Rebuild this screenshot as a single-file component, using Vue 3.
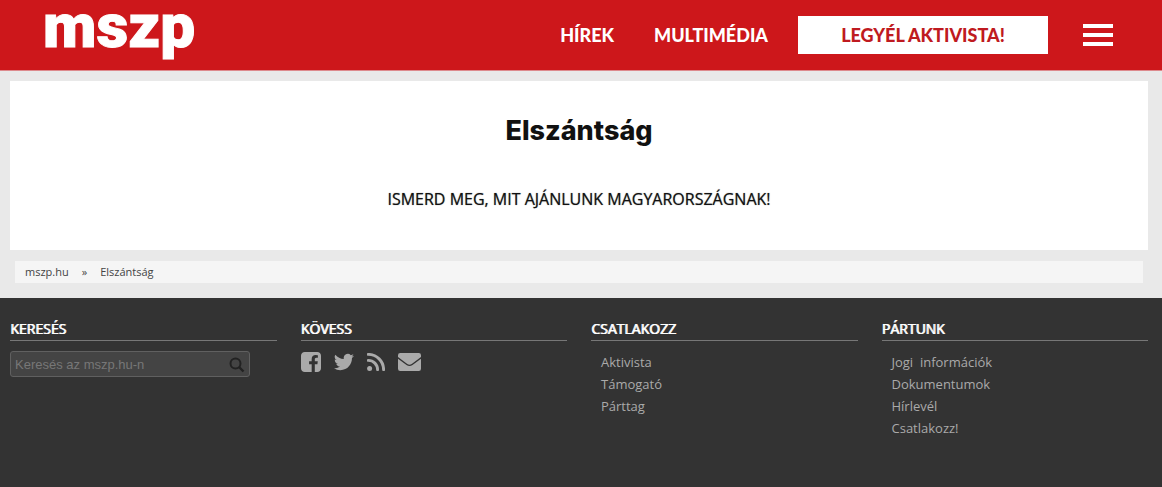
<script setup>
const joinLinks = ['Aktivista', 'Támogató', 'Párttag']
const partyLinks = ['Jogi \u00a0információk', 'Dokumentumok', 'Hírlevél', 'Csatlakozz!']
</script>

<template>
  <div class="page">
    <header class="header">
      <a href="#" class="logo">mszp</a>
      <nav class="nav">
        <a href="#" class="nav-link">HÍREK</a>
        <a href="#" class="nav-link">MULTIMÉDIA</a>
        <a href="#" class="cta">LEGYÉL AKTIVISTA!</a>
        <button type="button" class="menu" aria-label="Menü">
          <span></span><span></span><span></span>
        </button>
      </nav>
    </header>

    <main class="main">
      <article class="card">
        <h1>Elszántság</h1>
        <p>ISMERD MEG, MIT AJÁNLUNK MAGYARORSZÁGNAK!</p>
      </article>
      <nav class="crumbs">
        <a href="#">mszp.hu</a>
        <span>»</span>
        <a href="#">Elszántság</a>
      </nav>
    </main>

    <footer class="footer">
      <section>
        <h2>KERESÉS</h2>
        <form class="search" @submit.prevent>
          <input type="text" aria-label="Keresés" placeholder="Keresés az mszp.hu-n" />
          <button type="submit" aria-label="Keresés indítása">
            <svg width="16" height="16" viewBox="0 0 16 16" fill="none" stroke="#222" stroke-width="2">
              <circle cx="6.5" cy="6.5" r="5" />
              <path d="M10 10l4.5 4.5" stroke-width="2.4" />
            </svg>
          </button>
        </form>
      </section>
      <section>
        <h2>KÖVESS</h2>
        <div class="social">
          <a href="#" aria-label="Facebook">
            <svg width="20" height="20" viewBox="0 0 1536 1536"><path d="M1248 0q119 0 203.500 84.500t84.500 203.500v960q0 119-84.500 203.500t-203.500 84.500h-188v-595h199l30-232h-229v-148q0-56 23.500-84t91.500-28l122-1v-207q-63-9-178-9-136 0-217.500 80t-81.500 226v171h-200v232h200v595h-532q-119 0-203.500-84.500t-84.500-203.500v-960q0-119 84.500-203.500t203.500-84.500z" /></svg>
          </a>
          <a href="#" aria-label="Twitter">
            <svg width="20" height="18" viewBox="0 2 24 20"><path d="M23.950 4.570a10 10 0 0 1-2.820.77 4.960 4.960 0 0 0 2.160-2.720 9.900 9.900 0 0 1-3.120 1.190 4.920 4.920 0 0 0-8.390 4.480A13.930 13.930 0 0 1 1.640 3.160a4.920 4.920 0 0 0 1.520 6.570 4.900 4.900 0 0 1-2.230-.61v.06a4.920 4.920 0 0 0 3.950 4.830 5 5 0 0 1-2.210.08 4.940 4.940 0 0 0 4.600 3.420A9.870 9.870 0 0 1 0 19.540a14 14 0 0 0 7.550 2.210c9.050 0 14-7.500 14-13.980 0-.21 0-.42-.02-.63a9.940 9.940 0 0 0 2.460-2.550z" /></svg>
          </a>
          <a href="#" aria-label="RSS">
            <svg width="18" height="18" viewBox="0 0 18 18">
              <circle cx="2.600" cy="15.400" r="2.500" />
              <path d="M1.300 7.400a9.300 9.300 0 0 1 9.300 9.300M1.300 1.400a15.300 15.300 0 0 1 15.300 15.300" fill="none" stroke="#aaa" stroke-width="2.900" stroke-linecap="round" />
            </svg>
          </a>
          <a href="#" aria-label="E-mail">
            <svg width="23" height="18" viewBox="0 0 23 18">
              <path d="M2.200 0h18.600A2.200 2.200 0 0 1 23 2.200v1.700l-9.300 7q-2.200 1.500-4.400 0L0 3.900V2.200A2.200 2.200 0 0 1 2.200 0z" />
              <path d="M0 5.700l8.500 6.400q3 2 6 0L23 5.700v10.100a2.200 2.200 0 0 1-2.200 2.200H2.200A2.200 2.200 0 0 1 0 15.800z" />
            </svg>
          </a>
        </div>
      </section>
      <section>
        <h2>CSATLAKOZZ</h2>
        <ul>
          <li v-for="link in joinLinks" :key="link"><a href="#">{{ link }}</a></li>
        </ul>
      </section>
      <section>
        <h2>PÁRTUNK</h2>
        <ul>
          <li v-for="link in partyLinks" :key="link"><a href="#">{{ link }}</a></li>
        </ul>
      </section>
    </footer>
  </div>
</template>

<style>
body {
  margin: 0;
  background: #e9e9e9;
}
</style>

<style scoped>
.page {
  display: flex;
  flex-direction: column;
  min-height: 100vh;
  font-family: "Open Sans", sans-serif;
}
a {
  color: inherit;
  text-decoration: none;
}
.header {
  display: flex;
  align-items: center;
  justify-content: space-between;
  height: 70px;
  padding: 0 49px 0 43px;
  background: #cd171b;
  border-bottom: 1px solid #dd8a8d;
}
.logo {
  align-self: flex-start;
  color: #fff;
  font: 900 62px/52px Roboto, sans-serif;
  -webkit-text-stroke: 1px #fff;
}
.nav {
  display: flex;
  align-items: center;
  font: 900 18px/38px Lato, sans-serif;
  color: #fff;
}
.nav-link {
  margin-right: 40px;
}
.nav-link + .cta {
  margin-left: -10px;
}
.cta {
  min-width: 250px;
  background: #fff;
  color: #bf1a20;
  text-align: center;
}
.menu {
  display: grid;
  gap: 5px;
  width: 30px;
  margin-left: 35px;
  padding: 0;
  border: 0;
  background: none;
}
.menu span {
  height: 4px;
  background: #fff;
}
.main {
  padding: 10px 14px 15px 10px;
}
.card {
  padding: 29px 0 40px;
  background: #fff;
  color: #111;
  text-align: center;
}
h1 {
  margin: 0;
  font: 800 27px/42px Inter, sans-serif;
}
.card p {
  margin: 36px 0 0;
  font-size: 16px;
  line-height: 22px;
  text-shadow: 0 0 1px rgba(17, 17, 17, 0.6);
}
.crumbs {
  display: flex;
  gap: 13px;
  margin: 11px 5px 0;
  padding: 0 10px;
  background: #f5f5f5;
  color: #444;
  font-size: 11px;
  line-height: 22px;
}
.footer {
  flex: 1;
  display: grid;
  grid-template-columns: repeat(4, 1fr);
  gap: 24px;
  padding: 21px 14px 20px 10px;
  background: #333;
  color: #aaa;
}
h2 {
  margin: 0 0 10px;
  padding-bottom: 1px;
  border-bottom: 1px solid #777;
  color: #fff;
  font-size: 14px;
  font-weight: 400;
  line-height: 20px;
  text-shadow: 1px 0 #fff;
}
ul {
  margin: 0;
  padding: 0 10px;
  list-style: none;
  font-size: 13px;
  line-height: 22px;
}
.search {
  display: flex;
  align-items: center;
  box-sizing: border-box;
  width: 240px;
  max-width: 100%;
  height: 26px;
  padding: 0 4px;
  border: 1px solid #606060;
  border-radius: 3px;
  background: #444;
}
.search input {
  flex: 1;
  min-width: 0;
  padding: 0;
  border: 0;
  outline: 0;
  background: none;
  color: #ccc;
  font: 13px "Liberation Sans", sans-serif;
}
.search input::placeholder {
  color: #777;
}
.search button {
  display: flex;
  padding: 2px 0 0;
  border: 0;
  background: none;
}
.social {
  display: flex;
  align-items: center;
  gap: 13px;
  height: 22px;
}
.social a {
  display: flex;
}
.social svg {
  fill: #aaa;
}
</style>
